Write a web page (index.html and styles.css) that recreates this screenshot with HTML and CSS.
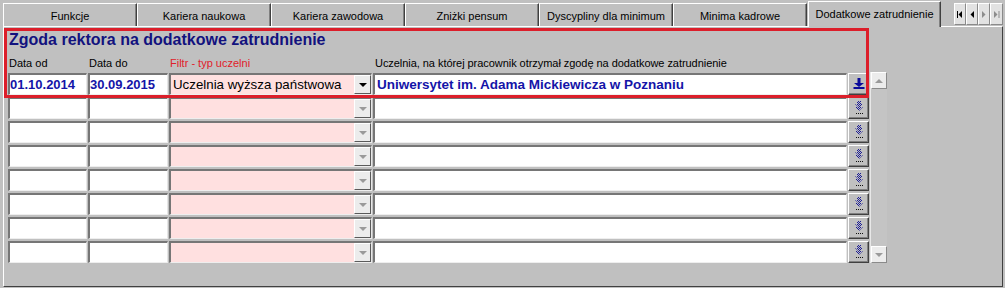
FILE: index.html
```html
<!DOCTYPE html>
<html lang="pl">
<head>
<meta charset="utf-8">
<title>Dodatkowe zatrudnienie</title>
<link rel="stylesheet" href="styles.css">
</head>
<body>
<svg class="defs" width="0" height="0" aria-hidden="true">
  <defs>
    <pattern id="dots" width="2" height="2" patternUnits="userSpaceOnUse">
      <rect x="0" y="0" width="1" height="1" fill="#1c1c96"/>
      <rect x="1" y="1" width="1" height="1" fill="#1c1c96"/>
    </pattern>
    <pattern id="dotsk" width="2" height="1" patternUnits="userSpaceOnUse">
      <rect x="0" y="0" width="1" height="1" fill="#101010"/>
    </pattern>
  </defs>
</svg>
<div class="tabbar">
  <div class="tab">Funkcje</div>
  <div class="tab">Kariera naukowa</div>
  <div class="tab">Kariera zawodowa</div>
  <div class="tab">Zniżki pensum</div>
  <div class="tab">Dyscypliny dla minimum</div>
  <div class="tab">Minima kadrowe</div>
  <div class="tab active">Dodatkowe zatrudnienie</div>
  <div class="tabnav">
    <div class="navbtn"><svg width="6" height="7" viewBox="0 0 6 7"><rect x="0" y="0" width="1" height="7" fill="#000"/><polygon points="5,0 5,7 1.5,3.5" fill="#000"/></svg></div>
    <div class="navbtn"><svg width="4" height="7" viewBox="0 0 4 7"><polygon points="4,0 4,7 0.5,3.5" fill="#000"/></svg></div>
    <div class="navbtn"><svg width="4" height="7" viewBox="0 0 4 7"><polygon points="0,0 0,7 3.5,3.5" fill="#8c8c8c"/></svg></div>
    <div class="navbtn last"><svg width="6" height="7" viewBox="0 0 6 7"><polygon points="0,0 0,7 3.5,3.5" fill="#8c8c8c"/><rect x="4.5" y="0" width="1" height="7" fill="#8c8c8c"/></svg></div>
  </div>
</div>
<div class="panel">
  <div class="highlight"></div>
  <h1 class="title">Zgoda rektora na dodatkowe zatrudnienie</h1>
  <div class="grid labels">
    <div class="lbl">Data od</div>
    <div class="lbl">Data do</div>
    <div class="lbl red">Filtr - typ uczelni</div>
    <div class="lbl wide">Uczelnia, na której pracownik otrzymał zgodę na dodatkowe zatrudnienie</div>
  </div>
  <div class="grid rows">
    <div class="scroll">
      <div class="sbtn"><span class="tri up"></span></div>
      <div class="sbtn"><span class="tri"></span></div>
    </div>

    <div class="field date">01.10.2014</div>
    <div class="field date">30.09.2015</div>
    <div class="field combo"><span class="ctext">Uczelnia wyższa państwowa</span><span class="cbtn"><span class="tri dark"></span></span></div>
    <div class="field uni">Uniwersytet im. Adama Mickiewicza w Poznaniu</div>
    <div class="btn"><svg width="12" height="11" viewBox="0 0 12 11"><rect x="4.5" y="0" width="3" height="5" fill="#0a0a9a"/><polygon points="1,5 11,5 6,9" fill="#0a0a9a"/><rect x="0.5" y="9" width="11" height="2" fill="#0a0a9a"/></svg></div>

    <div class="field"></div><div class="field"></div><div class="field combo"><span class="ctext"></span><span class="cbtn"><span class="tri"></span></span></div><div class="field"></div>
    <div class="btn"><svg width="10" height="14" viewBox="0 0 10 14"><rect x="3" y="0" width="4" height="4" fill="url(#dots)"/><polygon points="1,3 9,3 5,7" fill="url(#dots)"/><polygon points="1,6 9,6 5,10" fill="url(#dots)"/><rect x="1" y="12" width="8" height="1" fill="url(#dotsk)"/></svg></div>

    <div class="field"></div><div class="field"></div><div class="field combo"><span class="ctext"></span><span class="cbtn"><span class="tri"></span></span></div><div class="field"></div>
    <div class="btn"><svg width="10" height="14" viewBox="0 0 10 14"><rect x="3" y="0" width="4" height="4" fill="url(#dots)"/><polygon points="1,3 9,3 5,7" fill="url(#dots)"/><polygon points="1,6 9,6 5,10" fill="url(#dots)"/><rect x="1" y="12" width="8" height="1" fill="url(#dotsk)"/></svg></div>

    <div class="field"></div><div class="field"></div><div class="field combo"><span class="ctext"></span><span class="cbtn"><span class="tri"></span></span></div><div class="field"></div>
    <div class="btn"><svg width="10" height="14" viewBox="0 0 10 14"><rect x="3" y="0" width="4" height="4" fill="url(#dots)"/><polygon points="1,3 9,3 5,7" fill="url(#dots)"/><polygon points="1,6 9,6 5,10" fill="url(#dots)"/><rect x="1" y="12" width="8" height="1" fill="url(#dotsk)"/></svg></div>

    <div class="field"></div><div class="field"></div><div class="field combo"><span class="ctext"></span><span class="cbtn"><span class="tri"></span></span></div><div class="field"></div>
    <div class="btn"><svg width="10" height="14" viewBox="0 0 10 14"><rect x="3" y="0" width="4" height="4" fill="url(#dots)"/><polygon points="1,3 9,3 5,7" fill="url(#dots)"/><polygon points="1,6 9,6 5,10" fill="url(#dots)"/><rect x="1" y="12" width="8" height="1" fill="url(#dotsk)"/></svg></div>

    <div class="field"></div><div class="field"></div><div class="field combo"><span class="ctext"></span><span class="cbtn"><span class="tri"></span></span></div><div class="field"></div>
    <div class="btn"><svg width="10" height="14" viewBox="0 0 10 14"><rect x="3" y="0" width="4" height="4" fill="url(#dots)"/><polygon points="1,3 9,3 5,7" fill="url(#dots)"/><polygon points="1,6 9,6 5,10" fill="url(#dots)"/><rect x="1" y="12" width="8" height="1" fill="url(#dotsk)"/></svg></div>

    <div class="field"></div><div class="field"></div><div class="field combo"><span class="ctext"></span><span class="cbtn"><span class="tri"></span></span></div><div class="field"></div>
    <div class="btn"><svg width="10" height="14" viewBox="0 0 10 14"><rect x="3" y="0" width="4" height="4" fill="url(#dots)"/><polygon points="1,3 9,3 5,7" fill="url(#dots)"/><polygon points="1,6 9,6 5,10" fill="url(#dots)"/><rect x="1" y="12" width="8" height="1" fill="url(#dotsk)"/></svg></div>

    <div class="field"></div><div class="field"></div><div class="field combo"><span class="ctext"></span><span class="cbtn"><span class="tri"></span></span></div><div class="field"></div>
    <div class="btn"><svg width="10" height="14" viewBox="0 0 10 14"><rect x="3" y="0" width="4" height="4" fill="url(#dots)"/><polygon points="1,3 9,3 5,7" fill="url(#dots)"/><polygon points="1,6 9,6 5,10" fill="url(#dots)"/><rect x="1" y="12" width="8" height="1" fill="url(#dotsk)"/></svg></div>
  </div>
</div>
</body>
</html>
```

FILE: styles.css
```css
html, body {
  margin: 0;
  padding: 0;
}
body {
  background: #c0c0c0;
  font-family: "Liberation Sans", Arial, sans-serif;
  width: 1005px;
  height: 288px;
  overflow: hidden;
}
.defs {
  display: block;
  width: 0;
  height: 0;
}

/* tabs */
.tabbar {
  display: flex;
  align-items: flex-end;
  height: 26px;
  padding-left: 3px;
}
.tab {
  box-sizing: border-box;
  width: 134px;
  height: 23px;
  border-top: 1px solid #ffffff;
  border-left: 1px solid #ffffff;
  border-right: 1px solid #404040;
  box-shadow: inset -1px 0 #808080;
  background: #c0c0c0;
  display: flex;
  align-items: center;
  justify-content: center;
  font-size: 11px;
  color: #000;
  padding-top: 1px;
}
.tab.active {
  width: 133px;
  height: 26px;
  margin-left: 1px;
  margin-bottom: -1px;
  position: relative;
  z-index: 2;
  padding-top: 0;
  padding-bottom: 2px;
}
.tabnav {
  display: flex;
  align-self: flex-start;
  margin: 3px 2px 0 auto;
}
.navbtn {
  box-sizing: border-box;
  width: 12px;
  height: 22px;
  background: #e2e2e2;
  border: 1px solid;
  border-color: #ffffff #8a8a8a #8a8a8a #ffffff;
  display: flex;
  align-items: center;
  justify-content: center;
}
.navbtn.last {
  width: 13px;
}

/* panel */
.panel {
  box-sizing: border-box;
  width: 1000px;
  height: 261px;
  margin-left: 3px;
  border: 1px solid;
  border-color: #ffffff #404040 #404040 #ffffff;
  padding: 4px 0 0 4px;
  position: relative;
}
.highlight {
  position: absolute;
  left: 0;
  top: 1px;
  width: 865px;
  height: 70px;
  box-sizing: border-box;
  border: 3px solid #dc1e2a;
  pointer-events: none;
  z-index: 3;
}
.title {
  margin: 0;
  padding-left: 1px;
  font-size: 16px;
  line-height: 18px;
  font-weight: bold;
  color: #12127e;
}

.grid {
  display: grid;
  grid-template-columns: 79px 80px 203px 474px 21px 17px;
  column-gap: 1px;
}
.labels {
  margin-top: 8px;
  height: 13px;
}
.lbl {
  font-size: 11px;
  line-height: 13px;
  color: #000;
  white-space: nowrap;
  padding-left: 1px;
}
.lbl.red {
  color: #e0202a;
}
.lbl.wide {
  grid-column: 4 / 7;
  padding-left: 2px;
  letter-spacing: -0.05px;
}

.rows {
  margin-top: 3px;
  grid-template-rows: repeat(8, 22px);
  row-gap: 2px;
}
.field {
  box-sizing: border-box;
  background: #ffffff;
  border-style: solid;
  border-width: 2px 1px 1px 2px;
  border-color: #767676 #e6e6e6 #eeeeee #767676;
  font-size: 13px;
  line-height: 19px;
  white-space: nowrap;
  overflow: hidden;
}
.date {
  font-weight: bold;
  color: #1414a8;
  padding-left: 0;
}
.uni {
  font-weight: bold;
  font-size: 13.5px;
  color: #1414a8;
  padding-left: 2px;
}
.combo {
  background: #ffe0e0;
  display: flex;
  color: #000;
}
.ctext {
  flex: 1;
  padding-left: 2px;
  font-size: 13.3px;
}
.cbtn {
  box-sizing: border-box;
  width: 17px;
  height: 19px;
  background: #ececec;
  border-style: solid;
  border-width: 1px;
  border-color: #ffffff #5a5a5a #5a5a5a #ffffff;
  display: flex;
  align-items: center;
  justify-content: center;
}
.tri {
  width: 0;
  height: 0;
  border-left: 4px solid transparent;
  border-right: 4px solid transparent;
  border-top: 4px solid #9a9a9a;
}
.tri.dark {
  border-top-color: #000;
}
.tri.up {
  border-top: none;
  border-bottom: 4px solid #9a9a9a;
}
.btn {
  box-sizing: border-box;
  background: #c0c0c0;
  border-style: solid;
  border-width: 1px;
  border-color: #ffffff #404040 #404040 #ffffff;
  box-shadow: inset -1px -1px #808080;
  display: flex;
  align-items: center;
  justify-content: center;
  padding-bottom: 1px;
}
.scroll {
  grid-column: 6;
  grid-row: 1 / 9;
  display: flex;
  flex-direction: column;
  justify-content: space-between;
  background: #c4c4c4;
  margin-top: -1px;
  border-left: 1px solid #e8e8e8;
}
.sbtn {
  box-sizing: border-box;
  height: 17px;
  background: #ececec;
  border-style: solid;
  border-width: 1px;
  border-color: #ffffff #8a8a8a #8a8a8a #ffffff;
  display: flex;
  align-items: center;
  justify-content: center;
}
```
